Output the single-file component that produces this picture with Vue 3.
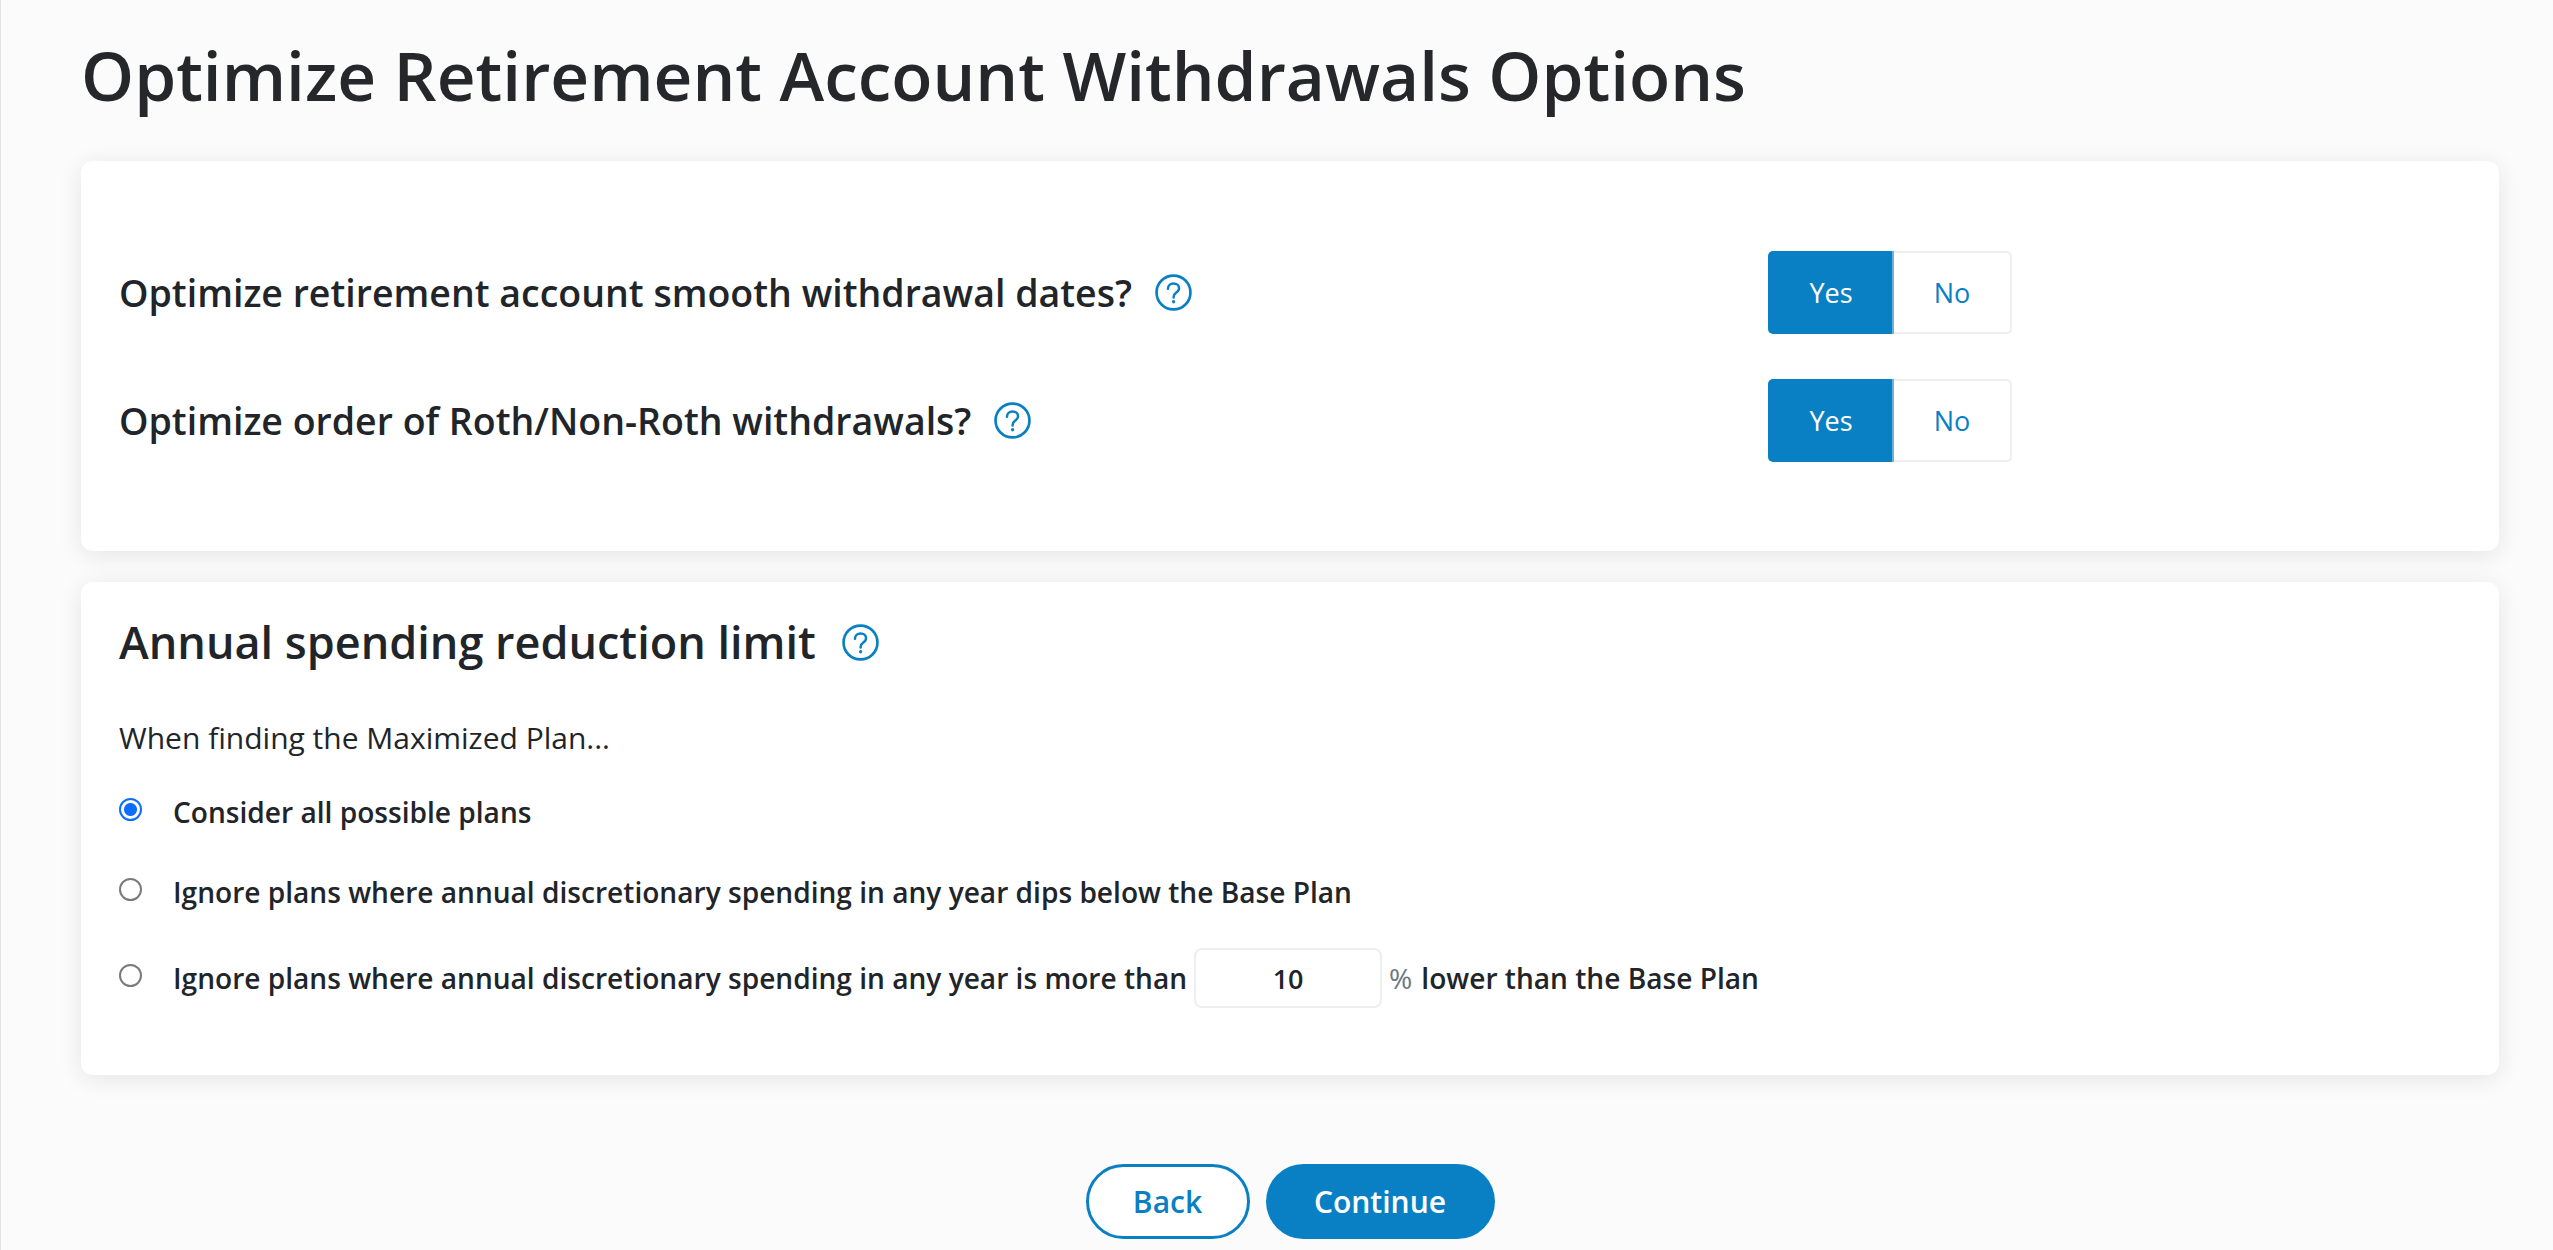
<script setup>
const toggles = [
  { label: 'Optimize retirement account smooth withdrawal dates?' },
  { label: 'Optimize order of Roth/Non-Roth withdrawals?' },
]
</script>

<template>
  <div class="page">
    <h1 class="title">Optimize Retirement Account Withdrawals Options</h1>

    <section class="card card-top">
      <div v-for="t in toggles" :key="t.label" class="toggle-row">
        <div class="question">
          <span>{{ t.label }}</span>
          <svg class="help" viewBox="0 0 36 36" fill="none">
            <circle cx="18" cy="18" r="16.5" stroke="#0a80c4" stroke-width="2.6" />
            <path d="M12.6 14.4c0-3.2 2.4-5.2 5.5-5.2 3 0 5.3 1.9 5.3 4.6 0 2.2-1.2 3.3-2.9 4.5-1.6 1.1-2.4 2-2.4 4v.6" stroke="#0a80c4" stroke-width="2.4" stroke-linecap="round" />
            <circle cx="18.1" cy="27" r="1.6" fill="#0a80c4" />
          </svg>
        </div>
        <div class="switch">
          <button class="sw sw-yes">Yes</button>
          <button class="sw sw-no">No</button>
        </div>
      </div>
    </section>

    <section class="card card-bottom">
      <h2 class="subhead">
        <span>Annual spending reduction limit</span>
        <svg class="help" viewBox="0 0 36 36" fill="none">
          <circle cx="18" cy="18" r="16.5" stroke="#0a80c4" stroke-width="2.6" />
          <path d="M12.6 14.4c0-3.2 2.4-5.2 5.5-5.2 3 0 5.3 1.9 5.3 4.6 0 2.2-1.2 3.3-2.9 4.5-1.6 1.1-2.4 2-2.4 4v.6" stroke="#0a80c4" stroke-width="2.4" stroke-linecap="round" />
          <circle cx="18.1" cy="27" r="1.6" fill="#0a80c4" />
        </svg>
      </h2>
      <p class="lead">When finding the Maximized Plan...</p>

      <label class="opt opt-1">
        <input type="radio" name="limit" class="radio" checked />
        <span>Consider all possible plans</span>
      </label>
      <label class="opt opt-2">
        <input type="radio" name="limit" class="radio" />
        <span>Ignore plans where annual discretionary spending in any year dips below the Base Plan</span>
      </label>
      <label class="opt opt-3">
        <input type="radio" name="limit" class="radio" />
        <span>Ignore plans where annual discretionary spending in any year is more than</span>
        <input class="pct" type="text" value="10" />
        <span class="pct-sign">%</span>
        <span>lower than the Base Plan</span>
      </label>
    </section>

    <div class="actions">
      <button class="btn btn-back">Back</button>
      <button class="btn btn-continue">Continue</button>
    </div>
  </div>
</template>

<style scoped>
.page {
  box-sizing: border-box;
  height: 1250px;
  overflow: hidden;
  padding: 0 54px 0 80px;
  background: #fbfbfb;
  border-left: 1px solid #e4e4e4;
  color: #212529;
  font-family: "Open Sans", sans-serif;
}
.title {
  margin: 0;
  padding-top: 28px;
  height: 161px;
  box-sizing: border-box;
  font-size: 67.5px;
  line-height: 94px;
  font-weight: 600;
  color: #25272b;
}
.card {
  box-sizing: border-box;
  background: #fff;
  border-radius: 12px;
  box-shadow: 0 4px 24px rgba(0, 0, 0, 0.09);
}
.card-top {
  height: 390px;
  padding: 90px 38px 0;
  display: flex;
  flex-direction: column;
  gap: 45px;
}
.toggle-row {
  display: flex;
  align-items: center;
  height: 83px;
}
.question {
  width: 1649px;
  display: flex;
  align-items: center;
  gap: 23px;
  font-size: 37.5px;
  font-weight: 600;
}
.help {
  width: 37px;
  height: 37px;
  flex: none;
}
.switch {
  display: flex;
  height: 83px;
}
.sw {
  box-sizing: border-box;
  height: 83px;
  font-family: inherit;
  font-size: 27px;
  cursor: pointer;
  padding: 0;
}
.sw-yes {
  width: 126px;
  padding-left: 2px;
  background: #0a80c4;
  color: #fff;
  border: none;
  border-right: 2px solid #6fb0d8;
  border-radius: 5px 0 0 5px;
}
.sw-no {
  width: 118px;
  background: #fff;
  color: #0a80c4;
  border: 2px solid #eeeeee;
  border-left: none;
  border-radius: 0 5px 5px 0;
}
.card-bottom {
  margin-top: 31px;
  height: 493px;
  padding: 0 38px;
}
.subhead {
  margin: 0;
  padding-top: 30px;
  display: flex;
  align-items: center;
  gap: 26px;
  font-size: 45px;
  line-height: 60px;
  font-weight: 600;
}
.lead {
  margin: 46px 0 0;
  font-size: 30px;
  line-height: 40px;
}
.opt {
  display: flex;
  align-items: center;
  font-size: 28.1px;
  font-weight: 600;
}
.opt-1 {
  margin-top: 34px;
  height: 40px;
}
.opt-2 {
  margin-top: 40px;
  height: 40px;
}
.opt-3 {
  margin-top: 36px;
  height: 60px;
}
.radio {
  appearance: none;
  box-sizing: border-box;
  width: 23px;
  height: 23px;
  margin: -6px 31px 0 0;
  flex: none;
  background: #fff;
  border: 2px solid #7a7a7a;
  border-radius: 50%;
}
.radio:checked {
  border-color: #0d6efd;
  background: radial-gradient(circle, #0d6efd 0 6px, #fff 7px);
}
.pct {
  box-sizing: border-box;
  width: 188px;
  height: 60px;
  margin: 0 7px 0 7px;
  border: 2px solid #eeeeee;
  border-radius: 8px;
  background: #fff;
  text-align: center;
  font-family: inherit;
  font-size: 27px;
  font-weight: 600;
  color: #212529;
  outline: none;
}
.pct-sign {
  color: #6c757d;
  font-weight: 400;
  margin-right: 9px;
}
.actions {
  display: flex;
  justify-content: center;
  gap: 16px;
  margin-top: 89px;
}
.btn {
  box-sizing: border-box;
  height: 75px;
  border-radius: 38px;
  font-family: inherit;
  font-size: 30px;
  font-weight: 600;
  cursor: pointer;
}
.btn-back {
  width: 164px;
  background: #fff;
  color: #0a80c4;
  border: 3px solid #0a80c4;
}
.btn-continue {
  width: 229px;
  background: #0a80c4;
  color: #fff;
  border: none;
}
</style>
<style>
html, body { background: #fbfbfb; }
</style>
